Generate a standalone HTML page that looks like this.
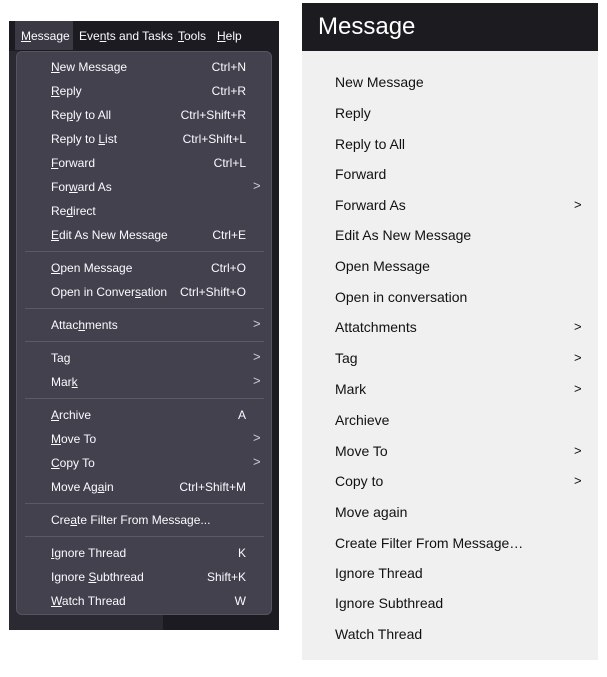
<!DOCTYPE html>
<html><head><style>
body{margin:0;width:607px;height:677px;background:#fff;position:relative;overflow:hidden;font-family:"Liberation Sans",sans-serif}
.bgL{position:absolute;left:9px;top:21px;width:270px;height:609px;background:#1c1b22}
.bgL2{position:absolute;left:9px;top:51px;width:154px;height:579px;background:#2b2a33}
.bar{position:absolute;left:9px;top:21px;width:270px;height:29px;background:#1c1b22;color:#fbfbfe;font-size:12px}
.bar span{position:absolute;top:8px}
.bar .act{background:#3a3944;left:6px;top:0;height:29px;width:58px}
.menu{position:absolute;left:16px;top:51px;width:256px;height:564px;background:#42414d;border:1px solid #55545f;box-sizing:border-box;border-radius:6px;color:#fbfbfe;font-size:12px}
.it{position:absolute;left:34px;width:195px}
.it b{font-weight:normal;position:absolute;right:0;top:0}
.it i{font-style:normal;position:absolute;left:202px;top:-2px;font-size:13px;color:#cfcfd8}
.sep{position:absolute;left:8px;width:239px;height:1px;background:#5b5a65}
.rh{position:absolute;left:302px;top:3px;width:296px;height:48px;background:#1c1b1f;color:#fff;font-size:24px}
.rh span{position:absolute;left:16px;top:10px}
.rb{position:absolute;left:302px;top:51px;width:296px;height:609px;background:#f0f0f0;font-size:14px;color:#111}
.r{position:absolute;left:33px}
.r i{font-style:normal;position:absolute;left:239px;font-size:13px}
</style></head><body>
<div class="bgL"></div><div class="bgL2"></div>
<div class="bar"><div class="act" style="position:absolute"></div>
<span style="left:12px"><u>M</u>essage</span><span style="left:70px">Eve<u>n</u>ts and Tasks</span><span style="left:169px"><u>T</u>ools</span><span style="left:208px"><u>H</u>elp</span></div>
<div class="menu">
<div class="it" style="top:8px"><u>N</u>ew Message<b>Ctrl+N</b></div>
<div class="it" style="top:32px"><u>R</u>eply<b>Ctrl+R</b></div>
<div class="it" style="top:56px">Re<u>p</u>ly to All<b>Ctrl+Shift+R</b></div>
<div class="it" style="top:80px">Reply to <u>L</u>ist<b>Ctrl+Shift+L</b></div>
<div class="it" style="top:104px"><u>F</u>orward<b>Ctrl+L</b></div>
<div class="it" style="top:128px">For<u>w</u>ard As<i>&gt;</i></div>
<div class="it" style="top:152px">Re<u>d</u>irect</div>
<div class="it" style="top:176px"><u>E</u>dit As New Message<b>Ctrl+E</b></div>
<div class="sep" style="top:199px"></div>
<div class="it" style="top:209px"><u>O</u>pen Message<b>Ctrl+O</b></div>
<div class="it" style="top:233px">Open in Conver<u>s</u>ation<b>Ctrl+Shift+O</b></div>
<div class="sep" style="top:256px"></div>
<div class="it" style="top:266px">Attac<u>h</u>ments<i>&gt;</i></div>
<div class="sep" style="top:289px"></div>
<div class="it" style="top:299px">Ta<u>g</u><i>&gt;</i></div>
<div class="it" style="top:323px">Mar<u>k</u><i>&gt;</i></div>
<div class="sep" style="top:346px"></div>
<div class="it" style="top:356px"><u>A</u>rchive<b>A</b></div>
<div class="it" style="top:380px"><u>M</u>ove To<i>&gt;</i></div>
<div class="it" style="top:404px"><u>C</u>opy To<i>&gt;</i></div>
<div class="it" style="top:428px">Move Ag<u>a</u>in<b>Ctrl+Shift+M</b></div>
<div class="sep" style="top:451px"></div>
<div class="it" style="top:461px">Cre<u>a</u>te Filter From Message...</div>
<div class="sep" style="top:484px"></div>
<div class="it" style="top:494px"><u>I</u>gnore Thread<b>K</b></div>
<div class="it" style="top:518px">Ignore <u>S</u>ubthread<b>Shift+K</b></div>
<div class="it" style="top:542px"><u>W</u>atch Thread<b>W</b></div>
</div>
<div class="rh"><span>Message</span></div>
<div class="rb">
<div class="r" style="top:23px">New Message</div>
<div class="r" style="top:54px">Reply</div>
<div class="r" style="top:85px">Reply to All</div>
<div class="r" style="top:115px">Forward</div>
<div class="r" style="top:146px">Forward As<i>&gt;</i></div>
<div class="r" style="top:176px">Edit As New Message</div>
<div class="r" style="top:207px">Open Message</div>
<div class="r" style="top:238px">Open in conversation</div>
<div class="r" style="top:268px">Attatchments<i>&gt;</i></div>
<div class="r" style="top:299px">Tag<i>&gt;</i></div>
<div class="r" style="top:330px">Mark<i>&gt;</i></div>
<div class="r" style="top:361px">Archieve</div>
<div class="r" style="top:392px">Move To<i>&gt;</i></div>
<div class="r" style="top:422px">Copy to<i>&gt;</i></div>
<div class="r" style="top:453px">Move again</div>
<div class="r" style="top:484px">Create Filter From Message…</div>
<div class="r" style="top:514px">Ignore Thread</div>
<div class="r" style="top:544px">Ignore Subthread</div>
<div class="r" style="top:575px">Watch Thread</div>
</div>
</body></html>
